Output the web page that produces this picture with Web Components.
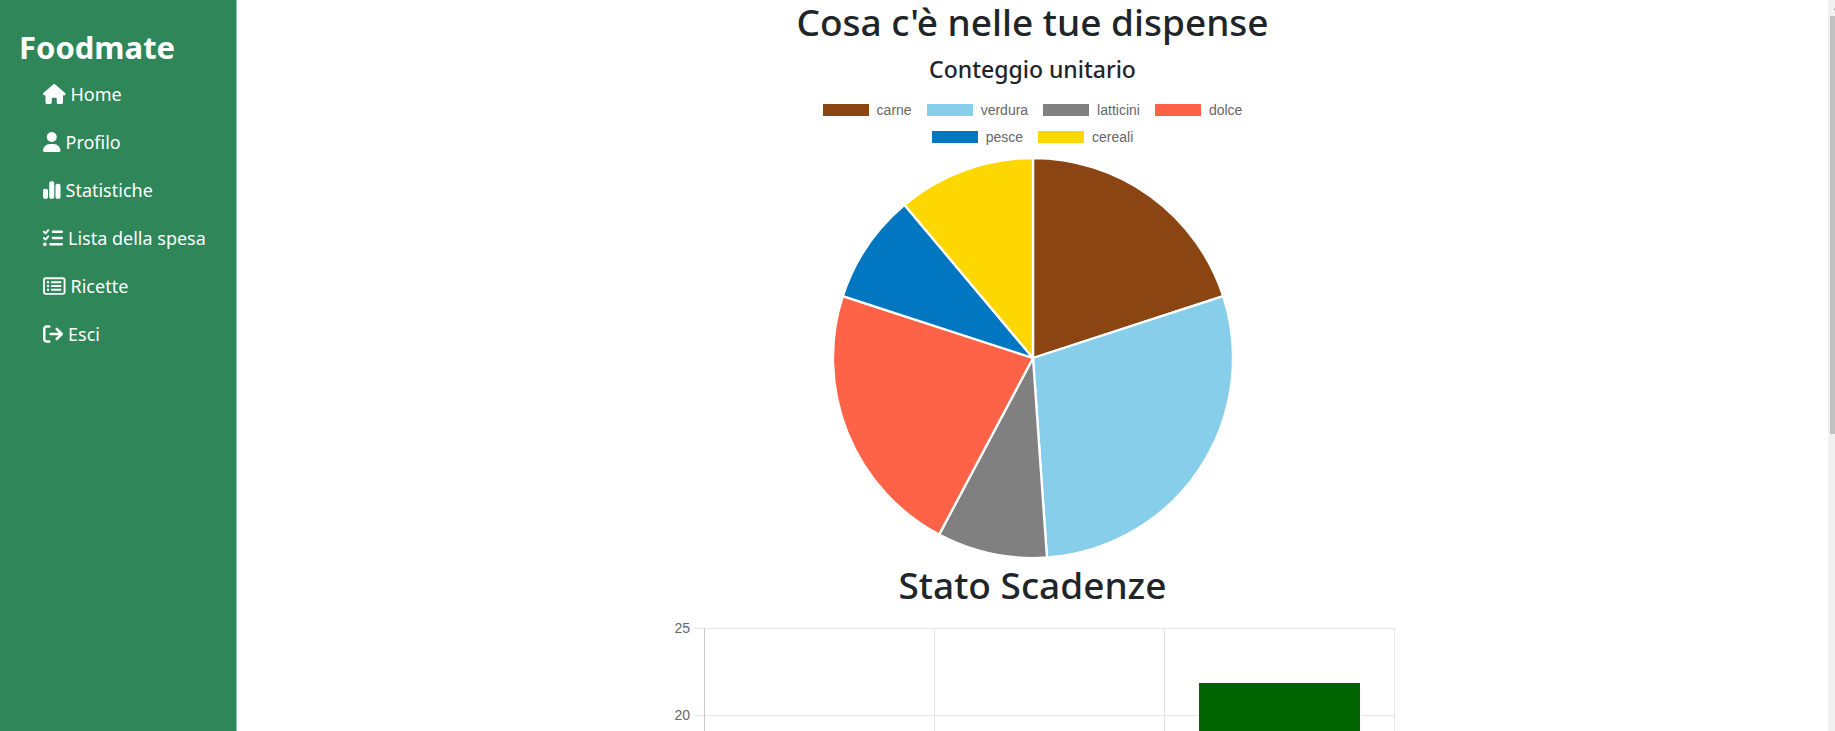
<!DOCTYPE html>
<html lang="it">
<head>
<meta charset="utf-8">
<title>Foodmate</title>
<style>
body { margin: 0; background: #fff; color: #212529; font-family: "Noto Sans", "Open Sans", sans-serif; }
</style>
</head>
<body>
<food-app>
  <side-bar slot="side" brand="Foodmate">
    <nav-item icon="house">Home</nav-item>
    <nav-item icon="user">Profilo</nav-item>
    <nav-item icon="chart">Statistiche</nav-item>
    <nav-item icon="check">Lista della spesa</nav-item>
    <nav-item icon="list">Ricette</nav-item>
    <nav-item icon="exit">Esci</nav-item>
  </side-bar>
  <chart-section heading="Cosa c'è nelle tue dispense" sub="Conteggio unitario">
    <pie-chart></pie-chart>
  </chart-section>
  <chart-section heading="Stato Scadenze">
    <bar-chart></bar-chart>
  </chart-section>
</food-app>
<script>
const ICONS = {
  house: [576, 'M575.8 255.5c0 18-15 32.1-32 32.1h-32l.7 160.2c0 2.7-.2 5.4-.5 8.1V472c0 22.1-17.9 40-40 40H456c-1.1 0-2.2 0-3.3-.1c-1.4 .1-2.8 .1-4.2 .1H416 392c-22.1 0-40-17.9-40-40V448 384c0-17.7-14.3-32-32-32H256c-17.7 0-32 14.3-32 32v64 24c0 22.1-17.9 40-40 40H160 128.1c-1.5 0-3-.1-4.5-.2c-1.2 .1-2.4 .2-3.6 .2H104c-22.1 0-40-17.9-40-40V360c0-.9 0-1.9 .1-2.8V287.6H32c-18 0-32-14-32-32.1c0-9 3-17 10-24L266.4 8c7-7 15-8 22-8s15 2 21 7L564.8 231.5c8 7 12 15 11 24z'],
  user: [448, 'M224 256A128 128 0 1 0 224 0a128 128 0 1 0 0 256zm-45.7 48C79.8 304 0 383.8 0 482.3C0 498.7 13.3 512 29.7 512H418.3c16.4 0 29.7-13.3 29.7-29.7C448 383.8 368.2 304 269.7 304H178.3z'],
  chart: [448, 'M160 80c0-26.5 21.5-48 48-48h32c26.5 0 48 21.5 48 48V432c0 26.5-21.5 48-48 48H208c-26.5 0-48-21.5-48-48V80zM0 272c0-26.5 21.5-48 48-48H80c26.5 0 48 21.5 48 48V432c0 26.5-21.5 48-48 48H48c-26.5 0-48-21.5-48-48V272zM368 96h32c26.5 0 48 21.5 48 48V432c0 26.5-21.5 48-48 48H368c-26.5 0-48-21.5-48-48V144c0-26.5 21.5-48 48-48z'],
  check: [512, 'M152.1 38.2c9.9 8.9 10.7 24 1.8 33.9l-72 80c-4.4 4.9-10.6 7.8-17.2 7.9s-12.9-2.4-17.6-7L7 113C-2.3 103.6-2.3 88.4 7 79s24.6-9.4 33.9 0l22.1 22.1 55.1-61.2c8.9-9.9 24-10.7 33.9-1.8zm0 160c9.9 8.9 10.7 24 1.8 33.9l-72 80c-4.4 4.9-10.6 7.8-17.2 7.9s-12.9-2.4-17.6-7L7 273c-9.4-9.4-9.4-24.6 0-33.9s24.6-9.4 33.9 0l22.1 22.1 55.1-61.2c8.9-9.9 24-10.7 33.9-1.8zM224 96c0-17.7 14.3-32 32-32H480c17.7 0 32 14.3 32 32s-14.3 32-32 32H256c-17.7 0-32-14.3-32-32zm0 160c0-17.7 14.3-32 32-32H480c17.7 0 32 14.3 32 32s-14.3 32-32 32H256c-17.7 0-32-14.3-32-32zM160 416c0-17.7 14.3-32 32-32H480c17.7 0 32 14.3 32 32s-14.3 32-32 32H192c-17.7 0-32-14.3-32-32zM48 368a48 48 0 1 1 0 96 48 48 0 1 1 0-96z'],
  list: [576, 'M64 80c-8.8 0-16 7.2-16 16V416c0 8.8 7.2 16 16 16H512c8.8 0 16-7.2 16-16V96c0-8.8-7.2-16-16-16H64zM0 96C0 60.7 28.7 32 64 32H512c35.3 0 64 28.7 64 64V416c0 35.3-28.7 64-64 64H64c-35.3 0-64-28.7-64-64V96zm96 64a32 32 0 1 1 64 0 32 32 0 1 1 -64 0zm104 0c0-13.3 10.7-24 24-24H448c13.3 0 24 10.7 24 24s-10.7 24-24 24H224c-13.3 0-24-10.7-24-24zm0 96c0-13.3 10.7-24 24-24H448c13.3 0 24 10.7 24 24s-10.7 24-24 24H224c-13.3 0-24-10.7-24-24zm0 96c0-13.3 10.7-24 24-24H448c13.3 0 24 10.7 24 24s-10.7 24-24 24H224c-13.3 0-24-10.7-24-24zm-72-64a32 32 0 1 1 0-64 32 32 0 1 1 0 64zM96 352a32 32 0 1 1 64 0 32 32 0 1 1 -64 0z'],
  exit: [512, 'M502.6 278.6c12.5-12.5 12.5-32.8 0-45.3l-128-128c-12.5-12.5-32.8-12.5-45.3 0s-12.5 32.8 0 45.3L402.7 224 192 224c-17.7 0-32 14.3-32 32s14.3 32 32 32l210.7 0-73.4 73.4c-12.5 12.5-12.5 32.8 0 45.3s32.8 12.5 45.3 0l128-128zM160 96c17.7 0 32-14.3 32-32s-14.3-32-32-32L96 32C43 32 0 75 0 128L0 384c0 53 43 96 96 96l64 0c17.7 0 32-14.3 32-32s-14.3-32-32-32l-64 0c-17.7 0-32-14.3-32-32l0-256c0-17.7 14.3-32 32-32l64 0z']
};

function define(name, render) {
  customElements.define(name, class extends HTMLElement {
    connectedCallback() {
      if (this.shadowRoot) return;
      this.attachShadow({ mode: 'open' }).innerHTML = render(this);
    }
  });
}

define('food-app', () => `
  <style>
    :host { display: flex; height: 100vh; overflow: hidden; }
    main { flex: 1; min-width: 0; }
  </style>
  <slot name="side"></slot>
  <main><slot></slot></main>
  <scroll-rail></scroll-rail>`);

define('scroll-rail', () => `
  <style>
    :host { display: flex; flex-direction: column; width: 7px; box-sizing: border-box; padding-left: 2px; background: #f1f1f1; }
    svg { flex: none; width: 5px; height: 16px; fill: #a0a0a0; }
    .track { flex: 1; }
    .thumb { height: 58.5%; background: #c1c1c1; }
  </style>
  <svg viewBox="0 0 5 16" aria-hidden="true"><path d="M4 9l1-1v2H4z"/></svg>
  <div class="track"><div class="thumb"></div></div>`);

define('side-bar', el => `
  <style>
    :host { display: block; flex: none; width: 237px; box-sizing: border-box; padding: 24px 19px; background: #2e8659; border-right: 1px solid #8bbca3; background-clip: padding-box; color: #fff; }
    h1 { margin: 0; font-size: 31px; line-height: 46px; font-weight: 700; }
    nav { padding-left: 24px; }
  </style>
  <h1>${el.getAttribute('brand')}</h1>
  <nav><slot></slot></nav>`);

define('nav-item', el => {
  const [w, d] = ICONS[el.getAttribute('icon')];
  return `
  <style>
    :host { display: block; height: 48px; }
    a { display: flex; align-items: center; gap: 5px; height: 48px; color: #fff; text-decoration: none; font-size: 18px; line-height: 28px; white-space: nowrap; }
    svg { flex: none; height: 20px; fill: currentColor; }
  </style>
  <a href="#"><svg viewBox="0 0 ${w} 512" aria-hidden="true"><path d="${d}"/></svg><slot></slot></a>`;
});

define('chart-section', el => {
  const sub = el.getAttribute('sub');
  return `
  <style>
    :host { display: flex; flex-direction: column; align-items: center; }
    h2, h3 { margin: 0; font-weight: 500; text-align: center; }
    h2 { font-size: 37px; line-height: 44px; padding-bottom: 11px; }
    h3 { font-size: 23px; line-height: 28px; padding-bottom: 9px; }
  </style>
  <h2>${el.getAttribute('heading')}</h2>
  ${sub ? `<h3>${sub}</h3>` : ''}
  <slot></slot>`;
});

const PANTRY = [
  ['carne', 9, '#8b4513'], ['verdura', 13, '#87ceeb'], ['latticini', 4, '#808080'],
  ['dolce', 10, '#ff6347'], ['pesce', 4, '#0077c0'], ['cereali', 5, '#ffd700']
];

define('pie-chart', () => {
  const total = PANTRY.reduce((sum, item) => sum + item[1], 0);
  const point = n => {
    const a = n / total * 2 * Math.PI;
    return `${(200 + 200 * Math.sin(a)).toFixed(2)} ${(200 - 200 * Math.cos(a)).toFixed(2)}`;
  };
  let seen = 0;
  const slices = PANTRY.map(([, n, color]) => {
    const from = point(seen);
    seen += n;
    return `<path fill="${color}" d="M200 200L${from}A200 200 0 0 1 ${point(seen)}Z"/>`;
  }).join('');
  return `
  <style>
    :host { display: flex; flex-direction: column; align-items: center; width: 460px; padding-bottom: 5px; }
    ul { display: flex; flex-wrap: wrap; justify-content: center; gap: 11px 15px; margin: 0; padding: 10px 0 13px; list-style: none; font: 14px/16px "Liberation Sans", Arial, sans-serif; color: #666; }
    li { display: flex; align-items: center; gap: 8px; }
    i { width: 46px; height: 12px; }
    svg { display: block; width: 400px; height: 400px; stroke: #fff; stroke-width: 2.3; stroke-linejoin: bevel; }
  </style>
  <ul>${PANTRY.map(([name, , color]) => `<li><i style="background:${color}"></i>${name}</li>`).join('')}</ul>
  <svg viewBox="0 0 400 400" role="img" aria-label="Conteggio unitario">${slices}</svg>`;
});

define('bar-chart', () => {
  const rows = [25, 20];
  const y = v => 10 + (25 - v) * 87 / 5;
  const grid = rows.map(v => `<path d="M24 ${y(v)}.5H724"/>`).join('') +
    [264, 494, 724].map(x => `<path d="M${x}.5 10V445"/>`).join('');
  return `
  <style>
    :host { display: block; width: 726px; }
    svg { display: block; width: 726px; height: 460px; }
    text { font: 14px "Liberation Sans", Arial, sans-serif; fill: #666; text-anchor: end; }
    .grid { stroke: #e5e5e5; fill: none; }
    .axis { stroke: #c8c8c8; }
    .bar { fill: #006400; stroke: #fff; stroke-width: 2; }
  </style>
  <svg viewBox="0 0 726 460" role="img" aria-label="Stato Scadenze">
    <g class="grid">${grid}</g>
    <path class="axis" d="M34.5 10V445"/>
    <rect class="bar" x="528" y="64" width="163" height="381"/>
    ${rows.map(v => `<text x="20" y="${y(v) + 5}">${v}</text>`).join('')}
  </svg>`;
});
</script>
</body>
</html>
